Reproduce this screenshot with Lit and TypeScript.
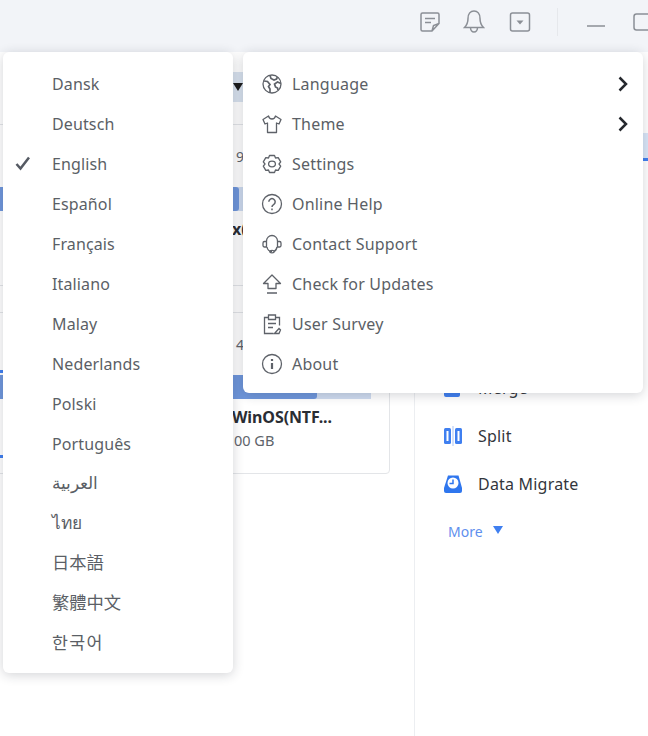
import { LitElement, html, css, svg } from 'lit';
import { customElement } from 'lit/decorators.js';

const languages = [
  { name: 'Dansk' }, { name: 'Deutsch' }, { name: 'English' }, { name: 'Español' },
  { name: 'Français' }, { name: 'Italiano' }, { name: 'Malay' }, { name: 'Nederlands' },
  { name: 'Polski' }, { name: 'Português' },
  // these come from a fallback font and sit a bit larger
  { name: 'العربية', cls: 'alt arabic' }, { name: 'ไทย', cls: 'alt thai' },
  { name: '日本語', cls: 'alt cjk' }, { name: '繁體中文', cls: 'alt cjk' },
  { name: '한국어', cls: 'alt cjk korean' },
];

// menu icons, 22px box
const icons: Record<string, unknown> = {
  Language: svg`<circle cx="11" cy="11" r="9"/><path stroke-width="1.700" d="M3 8l3.500 .5 2.500 3-1.500 2 1.500 2.500v3.500M9 2.500l1 3 3 1.500 2.500-1 1-2M20 10.500l-3.500-1.500-3 2 1 3 2 1 .5 2"/>`,
  Theme: svg`<path d="M7.500 3L2 6.500l2 4.500 2.500-1v9.500h9V10l2.500 1 2-4.500L14.500 3c-.5 2-1.800 3-3.500 3s-3-1-3.500-3z" stroke-linejoin="round"/>`,
  Settings: svg`<path stroke-linejoin="round" d="M8.500 2.500h5l1 2.500 2.700-.4 2.500 4.300-1.700 2.100 1.700 2.100-2.500 4.300-2.700-.4-1 2.500h-5l-1-2.500-2.700 .4-2.500-4.300 1.700-2.100-1.700-2.100 2.500-4.300 2.700 .4z"/><ellipse cx="11" cy="11" rx="3.400" ry="2.800"/>`,
  'Online Help': svg`<circle cx="11" cy="11" r="9.500"/><path stroke-width="1.500" d="M7.800 8.800a3.200 3.200 0 1 1 4.800 2.800c-1 .6-1.600 1.200-1.600 2.400M11 15.500v1.800"/>`,
  'Contact Support': svg`<path d="M5.500 9V8a5.500 5.500 0 0 1 11 0v1M5.500 8.500h-2A1.500 1.500 0 0 0 2 10v2.500A1.500 1.500 0 0 0 3.500 14h2zM16.500 8.500h2A1.500 1.500 0 0 1 20 10v2.500a1.500 1.500 0 0 1-1.500 1.500h-2zM6 14c.5 3 2.500 4.500 5 4.500M16 14c-.5 2.500-1.500 3.800-3 4.300"/><ellipse cx="11" cy="18.600" rx="2.200" ry="1.300"/>`,
  'Check for Updates': svg`<path stroke-linejoin="round" d="M11 2L2.500 10.500h4.500v5h8v-5h4.500zM6 20h10"/>`,
  'User Survey': svg`<path d="M7 4.500H3.500v16h9M15 4.500h3.500v8M7.500 2h7v4.500h-7zM7 10.500h8M7 14.500h5M13.500 20.500l4.500-5 1.500 1.500-1.500 3.500z"/>`,
  About: svg`<circle cx="11" cy="11" r="9.500"/><path d="M11 10v6" stroke-width="2.200"/><path d="M11 6v2" stroke-width="2.200"/>`,
};

const menuItems = [
  { label: 'Language', arrow: true }, { label: 'Theme', arrow: true }, { label: 'Settings' },
  { label: 'Online Help' }, { label: 'Contact Support' }, { label: 'Check for Updates' },
  { label: 'User Survey' }, { label: 'About' },
];

const disks = [
  { cap: '9', used: 248, name: 'x(', size: '', tick: false },
  { cap: '4', used: 326, name: 'WinOS(NTF...', size: '00 GB', tick: true },
];

@customElement('app-root')
export class AppRoot extends LitElement {
  static styles = css`
    :host {
      display: block;
      width: 648px;
      height: 736px;
      overflow: hidden;
      font-family: 'Noto Sans', 'Open Sans', 'Noto Sans CJK TC', sans-serif;
      color: #5b5f66;
    }

    .window {
      position: relative;
      width: 648px;
      height: 736px;
      background: #fff;
      overflow: hidden;
      display: flex;
      flex-direction: column;
    }

    .titlebar {
      flex: none;
      height: 52px;
      background: #f2f4f8;
      display: flex;
      align-items: flex-start;
      color: #8b8f96;
    }

    .tools {
      display: flex;
      align-items: center;
      height: 44px;
      margin-left: 419px;
    }

    .tools svg {
      display: block;
      flex: none;
      fill: none;
      stroke: currentColor;
      stroke-width: 1.500;
    }

    .tools svg + svg {
      margin-left: 22px;
    }

    .tools svg.box {
      margin-left: 24px;
    }

    .sep {
      flex: none;
      width: 1px;
      height: 28px;
      background: #e6e8ec;
      margin: 0 29px 0 26px;
    }

    .tools .sep + svg {
      margin-left: 0;
    }

    .tools svg.restore {
      margin-left: 25px;
    }

    /* main content, mostly hidden by the two menus */
    .content {
      flex: 1;
      display: flex;
      min-height: 0;
    }

    .leftpane {
      flex: none;
      width: 414px;
      border-right: 1px solid #eceef1;
      padding-top: 20px;
      box-sizing: content-box;
    }

    .toolbar {
      height: 30px;
      width: 100px;
      margin-left: 200px;
      margin-bottom: 22px;
      background: #d9e3ef;
      display: flex;
      align-items: center;
      justify-content: center;
    }

    .toolbar i {
      width: 0;
      height: 0;
      margin-left: -24px;
      border: 5px solid transparent;
      border-top: 8px solid #1c1c1c;
      border-bottom: 0;
    }

    .disks {
      display: flex;
      flex-direction: column;
      gap: 26px;
      margin-left: -10px;
      width: 400px;
    }

    .disk {
      position: relative;
      height: 162px;
      box-sizing: border-box;
      border: 1px solid #e3e5e8;
      border-radius: 4px;
      padding-top: 21px;
    }

    .cap {
      height: 22px;
      line-height: 22px;
      font-size: 14px;
      padding-left: 245px;
      color: #60646b;
      margin-bottom: 19px;
    }

    .usage {
      width: 380px;
      height: 24px;
      background: #cfdcf0;
    }

    .usage i {
      display: block;
      height: 100%;
      background: #6f97dc;
      border-radius: 0 3px 3px 0;
    }

    .diskname {
      margin-top: 7px;
      padding-left: 241px;
      font-size: 16px;
      font-weight: 700;
      color: #2a2d33;
      line-height: 22px;
      white-space: nowrap;
      letter-spacing: -0.1px;
    }

    .disksize {
      margin-top: 2px;
      padding-left: 243px;
      font-size: 14.500px;
      color: #60646b;
      line-height: 20px;
    }

    .tick {
      position: absolute;
      left: 0;
      width: 13px;
      height: 3px;
      background: #3f7ff0;
    }

    .rightpane {
      flex: 1;
      min-width: 0;
      padding-top: 81px;
    }

    .tab {
      height: 25px;
      width: 8px;
      margin-left: 225px;
      background: #d9e6f8;
      border-bottom: 3px solid #3f7ff0;
      margin-bottom: 203px;
    }

    .action {
      display: flex;
      align-items: center;
      gap: 15px;
      height: 48px;
      font-size: 16px;
      color: #33363c;
      margin-left: 28px;
      letter-spacing: 0.2px;
    }

    .action svg {
      display: block;
      flex: none;
    }

    .more {
      display: flex;
      align-items: center;
      gap: 10px;
      font-size: 14px;
      color: #5f8fee;
      height: 46px;
      margin-left: 33px;
    }

    .more i {
      width: 0;
      height: 0;
      border: 5px solid transparent;
      border-top: 8px solid #3f7ff0;
      border-bottom: 0;
      margin-top: -3px;
    }

    .menu {
      position: absolute;
      top: 52px;
      background: #fff;
      border-radius: 6px;
      box-shadow: 0 2px 12px rgba(30, 35, 50, 0.2);
      box-sizing: border-box;
      padding: 12px 0;
      display: flex;
      flex-direction: column;
    }

    .menu.lang {
      left: 3px;
      width: 230px;
      height: 621px;
    }

    .menu.main {
      left: 243px;
      width: 400px;
      height: 341px;
    }

    .row {
      position: relative;
      box-sizing: border-box;
      display: flex;
      align-items: center;
      height: 40px;
      padding-bottom: 1px;
      font-size: 16px;
      flex: none;
      letter-spacing: 0.12px;
    }

    .lang .row {
      padding-left: 49px;
    }

    .lang .row.alt {
      font-size: 17.300px;
      letter-spacing: 0;
    }

    .lang .row.arabic {
      padding-bottom: 4px;
    }

    .lang .row.thai {
      padding-bottom: 2px;
    }

    .lang .row.cjk {
      padding-bottom: 6px;
    }

    .lang .row.korean {
      letter-spacing: 1.300px;
    }

    .main .row {
      padding-left: 18px;
      gap: 9px;
      letter-spacing: 0.2px;
    }

    .row .icon {
      display: block;
      flex: none;
      fill: none;
      stroke: #5e6269;
      stroke-width: 1.300;
    }

    .check {
      position: absolute;
      left: 12px;
      top: 12px;
      display: block;
    }

    .arrow {
      position: absolute;
      right: 15px;
      top: 12px;
      display: block;
    }
  `;

  render() {
    return html`
      <div class="window">
        <div class="titlebar">
          <div class="tools">
            <svg width="22" height="22" viewBox="0 0 22 22">
              <path d="M20 12.500V3.500A1.500 1.500 0 0 0 18.500 2h-15A1.500 1.500 0 0 0 2 3.500v15A1.500 1.500 0 0 0 3.500 20H13zM6 7.500h10M6 11.500h6M13 20l1.500-5.500 5.500-2"/>
            </svg>
            <svg width="22" height="26" viewBox="0 0 22 26">
              <path d="M11 2c-3.500 0-6 3-6 7.500 0 4.500-1.500 7-3.500 9h19c-2-2-3.500-4.500-3.500-9C17 5 14.500 2 11 2zM7.500 18.500c0 2.500 1.500 4.500 3.500 4.500s3.500-2 3.500-4.500"/>
            </svg>
            <svg class="box" width="22" height="22" viewBox="0 0 22 22">
              <rect x="1.500" y="2" width="19" height="18" rx="2"/>
              <path d="M7.500 9.500h7L11 13.500z" fill="currentColor" stroke="none"/>
            </svg>
            <div class="sep"></div>
            <svg width="20" height="22" viewBox="0 0 20 22"><path d="M0 15h18"/></svg>
            <svg class="restore" width="20" height="22" viewBox="0 0 20 22"><rect x="2" y="3" width="22" height="16" rx="2.500"/></svg>
          </div>
        </div>
        <div class="content">
          <div class="leftpane">
            <div class="toolbar"><i></i></div>
            <div class="disks">
              ${disks.map((d) => html`
                <div class="disk">
                  ${d.tick ? html`<div class="tick" style="top: 57px"></div><div class="tick" style="top: 142px"></div>` : ''}
                  <div class="cap">${d.cap}</div>
                  <div class="usage"><i style="width: ${d.used}px"></i></div>
                  <div class="diskname">${d.name}</div>
                  <div class="disksize">${d.size}</div>
                </div>`)}
            </div>
          </div>
          <div class="rightpane">
            <div class="tab"></div>
            <div class="action">
              <svg width="20" height="20" viewBox="0 0 20 20"><rect x="1" y="1" width="16" height="18" rx="2" fill="#3f7ff0"/></svg>
              Merge
            </div>
            <div class="action">
              <svg width="20" height="20" viewBox="0 0 20 20"><rect x="1" y="2" width="7" height="16" rx="1.500" fill="#3f7ff0"/><rect x="12" y="2" width="7" height="16" rx="1.500" fill="#3f7ff0"/><rect x="3.500" y="5" width="2" height="10" fill="#fff"/><rect x="14.500" y="5" width="2" height="10" fill="#fff"/><rect x="9.500" y="0" width="1" height="20" fill="#a9c4f6"/></svg>
              Split
            </div>
            <div class="action">
              <svg width="20" height="20" viewBox="0 0 20 20"><path d="M5 1.500h10.500L19 14v3a2 2 0 0 1-2 2H3a2 2 0 0 1-2-2v-3z" fill="#2f76ee"/><circle cx="10" cy="9" r="5.500" fill="#fff"/><path d="M10 5.500v4H6.500" fill="none" stroke="#2f76ee" stroke-width="1.500"/></svg>
              Data Migrate
            </div>
            <div class="more">More <i></i></div>
          </div>
        </div>
        <div class="menu lang">
          ${languages.map((l) => html`
            <div class="row ${l.cls ?? ''}">
              ${l.name === 'English' ? html`<svg class="check" width="16" height="15" viewBox="0 0 16 15"><path d="M1.500 8l4 4.500 8.500-11" fill="none" stroke="#555a63" stroke-width="2.500"/></svg>` : ''}
              <span>${l.name}</span>
            </div>`)}
        </div>
        <div class="menu main">
          ${menuItems.map((m) => html`
            <div class="row">
              <svg class="icon" width="22" height="22" viewBox="0 0 22 22">${icons[m.label]}</svg>
              <span>${m.label}</span>
              ${m.arrow ? html`<svg class="arrow" width="10" height="16" viewBox="0 0 10 16"><path d="M1.500 1.500L8 8l-6.500 6.500" fill="none" stroke="#25282d" stroke-width="2.500"/></svg>` : ''}
            </div>`)}
        </div>
      </div>
    `;
  }
}
